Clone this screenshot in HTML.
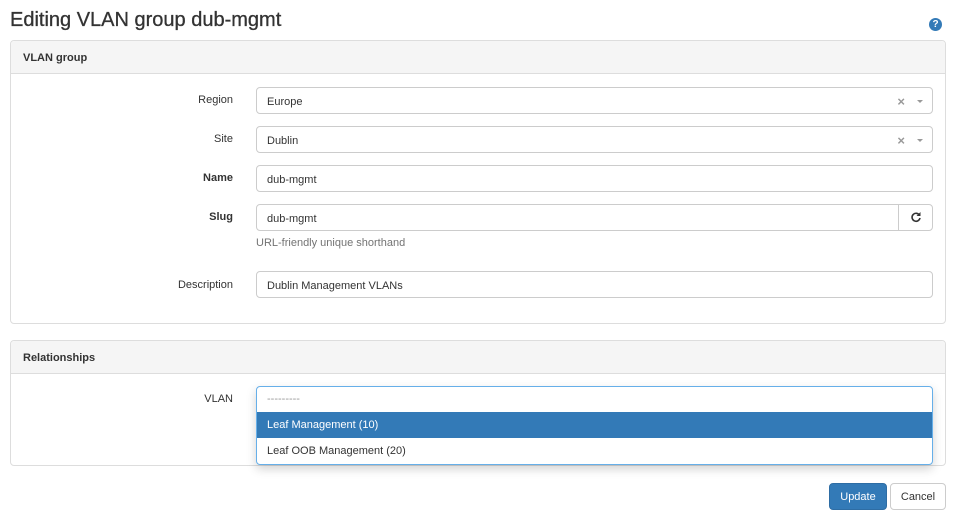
<!DOCTYPE html>
<html><head><meta charset="utf-8"><style>
*{box-sizing:border-box;margin:0;padding:0}
body{width:960px;height:518px;background:#fff;font-family:"Liberation Sans",Arial,sans-serif;color:#333;position:relative;overflow:hidden;font-size:11px}
.a{position:absolute}
h1{position:absolute;left:10px;top:9px;font-size:20px;font-weight:normal;color:#333;letter-spacing:0px;-webkit-text-stroke:0.3px #333}
.panel{position:absolute;left:10px;width:936px;border:1px solid #ddd;border-radius:4px;background:#fff}
.ph{height:33px;background:#f5f5f5;border-bottom:1px solid #ddd;font-weight:bold;font-size:11px;padding:11px 12px;border-radius:4px 4px 0 0}
.lbl{position:absolute;right:727px;font-size:11px;text-align:right}
.inp{position:absolute;left:256px;width:677px;height:27px;border:1px solid #ccc;border-radius:4px;padding:0 10px;line-height:26px;padding-top:1px;font-size:11px;background:#fff}
.x{position:absolute;right:27px;top:1px;color:#999;font-size:13px;font-weight:bold}
.car{position:absolute;right:9px;top:12px;border-left:3px solid transparent;border-right:3px solid transparent;border-top:3px solid #999}
</style></head><body>
<h1>Editing VLAN group dub-mgmt</h1>
<div class="a" style="left:929px;top:18px;width:13px;height:13px;border-radius:50%;background:#337ab7;color:#fff;font-size:10px;font-weight:bold;text-align:center;line-height:13px">?</div>

<div class="panel" style="top:40px;height:284px"><div class="ph">VLAN group</div></div>
<div class="lbl" style="top:94px">Region</div>
<div class="inp" style="top:87px">Europe<span class="x">×</span><span class="car"></span></div>
<div class="lbl" style="top:133px">Site</div>
<div class="inp" style="top:126px">Dublin<span class="x">×</span><span class="car"></span></div>
<div class="lbl" style="top:172px;font-weight:bold">Name</div>
<div class="inp" style="top:165px">dub-mgmt</div>
<div class="lbl" style="top:211px;font-weight:bold">Slug</div>
<div class="inp" style="top:204px">dub-mgmt<span class="a" style="right:0;top:-1px;width:34px;height:27px;border-left:1px solid #ccc;"><svg width="12" height="12" viewBox="0 0 12 12" style="position:absolute;left:11px;top:7px"><path d="M9.5 4.2A4 4 0 1 0 10 7" fill="none" stroke="#333" stroke-width="1.6"/><path d="M10.5 1v4h-4z" fill="#333"/></svg></span></div>
<div class="a" style="left:256px;top:237px;color:#737373;font-size:11px">URL-friendly unique shorthand</div>
<div class="lbl" style="top:279px">Description</div>
<div class="inp" style="top:271px">Dublin Management VLANs</div>

<div class="panel" style="top:340px;height:126px"><div class="ph">Relationships</div></div>
<div class="lbl" style="top:393px">VLAN</div>
<div class="a" style="left:256px;top:386px;width:677px;height:79px;border:1px solid #66afe9;border-radius:4px;background:#fff;box-shadow:0 4px 10px rgba(0,0,0,.18);overflow:hidden">
 <div style="height:25px;line-height:25px;padding-left:10px;color:#999">---------</div>
 <div style="height:26px;line-height:26px;padding-left:10px;background:#337ab7;color:#fff">Leaf Management (10)</div>
 <div style="height:26px;line-height:26px;padding-left:10px">Leaf OOB Management (20)</div>
</div>

<div class="a" style="left:829px;top:483px;width:58px;height:27px;background:#337ab7;border:1px solid #2e6da4;border-radius:4px;color:#fff;text-align:center;line-height:26px;font-size:11px">Update</div>
<div class="a" style="left:890px;top:483px;width:56px;height:27px;background:#fff;border:1px solid #ccc;border-radius:4px;color:#333;text-align:center;line-height:26px;font-size:11px">Cancel</div>
</body></html>
